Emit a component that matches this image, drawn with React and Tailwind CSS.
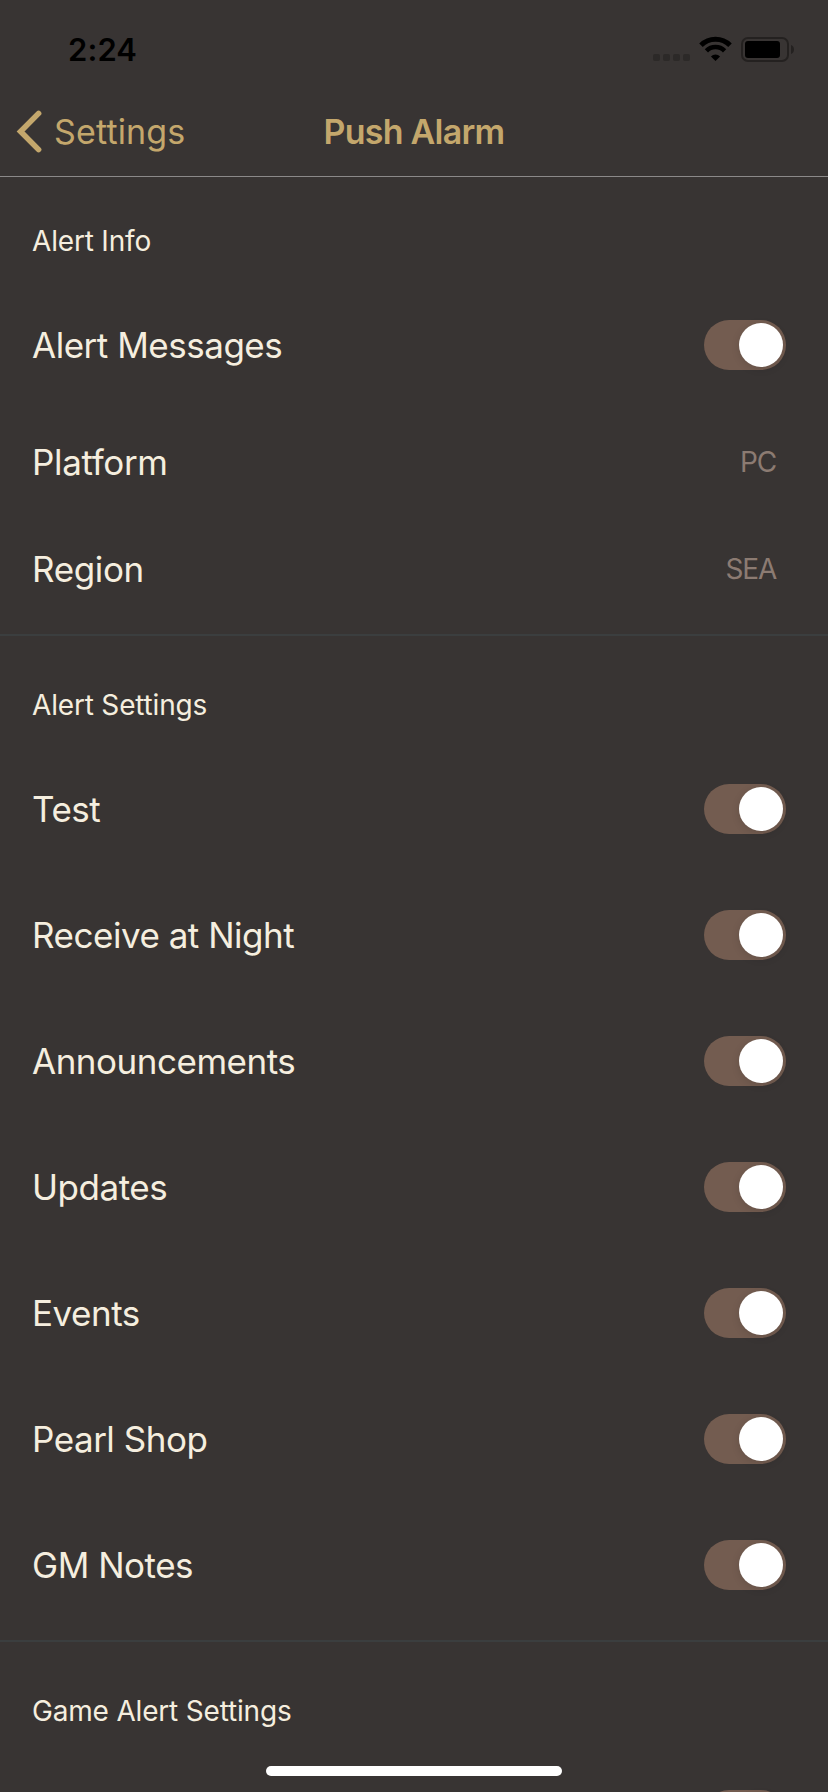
import { useState } from 'react'

const alertSettings = ['Test', 'Receive at Night', 'Announcements', 'Updates', 'Events', 'Pearl Shop', 'GM Notes']

function StatusBar() {
  return (
    <div className="flex h-[88px] items-start justify-between pl-[68px] pr-[33px]">
      <span className="mt-[31px] text-[31px] leading-[38px] font-semibold tracking-[0.1px] text-black">2:24</span>
      <div className="mt-[36px] flex h-[26px] items-start">
        <div className="mt-[18px] mr-[9px] flex gap-[3px]">
          {[0, 1, 2, 3].map((i) => (
            <span key={i} className="size-[7px] rounded-[2px] bg-[#2c2928]" />
          ))}
        </div>
        <svg className="h-[26px] w-[33px]" viewBox="0 0 33 26" fill="none">
          <path d="M2 9.2 A20.5 20.5 0 0 1 31 9.2" stroke="#000" strokeWidth="5" />
          <path d="M7.4 14.8 A12.8 12.8 0 0 1 25.6 14.8" stroke="#000" strokeWidth="4.6" />
          <path d="M16.5 25 L11.9 20.4 A6.5 6.5 0 0 1 21.1 20.4 Z" fill="#000" />
        </svg>
        <svg className="ml-[9px] h-[26px] w-[54px]" viewBox="0 0 54 26" fill="none">
          <rect x="1" y="2" width="46" height="23" rx="6" stroke="#242120" strokeWidth="2" />
          <rect x="4" y="5" width="35" height="17" rx="3" fill="#000" />
          <path d="M50 9 C54 10.5 54 16.5 50 18 Z" fill="#242120" />
        </svg>
      </div>
    </div>
  )
}

function NavBar() {
  return (
    <div className="grid h-[88px] grid-cols-3 items-center text-[34px] leading-[44px] text-[#c4a76c]">
      <button className="flex items-center pl-[16px]">
        <svg className="h-[44px] w-[27px]" viewBox="0 0 27 44" fill="none">
          <path d="M22.6 3.4 L4.6 21.5 L22.6 39.6" stroke="currentColor" strokeWidth="5.6" strokeLinecap="round" />
        </svg>
        <span className="ml-[11px] tracking-[0.15px]">Settings</span>
      </button>
      <h1 className="text-center font-semibold tracking-[-0.75px] whitespace-nowrap">Push Alarm</h1>
    </div>
  )
}

function Toggle() {
  const [on, setOn] = useState(true)

  return (
    <button
      role="switch"
      aria-checked={on}
      onClick={() => setOn(!on)}
      className={`flex h-[50px] w-[82px] items-center rounded-full px-[3px] ${on ? 'justify-end bg-[#735c50]' : 'justify-start bg-[#54504e]'}`}
    >
      <span className="size-[44px] rounded-full bg-white shadow-[0_2px_8px_rgba(0,0,0,0.12)]" />
    </button>
  )
}

function ToggleRow({ label }) {
  return (
    <div className="flex h-[126px] items-center justify-between pr-[42px] pl-[32px]">
      <span className="text-[35px] leading-[44px] tracking-[-0.48px]">{label}</span>
      <Toggle />
    </div>
  )
}

function ValueRow({ label, value }) {
  return (
    <div className="flex h-[107px] items-center justify-between pr-[52px] pl-[32px]">
      <span className="text-[35px] leading-[44px] tracking-[-0.35px]">{label}</span>
      <span className="text-[28px] leading-[36px] tracking-[-1.2px] text-[#8c7b72]">{value}</span>
    </div>
  )
}

function Section({ title, className = 'h-[110px] pt-[51px]', children }) {
  return (
    <section className="border-b-2 border-[#3b3e3f] pb-3">
      <h2 className={`pl-[32px] text-[28px] leading-[36px] tracking-[-0.18px] ${className}`}>{title}</h2>
      {children}
    </section>
  )
}

export default function App() {
  return (
    <div className="relative h-[1792px] w-[828px] overflow-hidden bg-[#383433] font-['Inter',sans-serif] text-[#f5eedf]">
      <header className="border-b border-[#8b8989]">
        <StatusBar />
        <NavBar />
      </header>

      <Section title="Alert Info" className="h-[105px] pt-[46px]">
        <ToggleRow label="Alert Messages" />
        <ValueRow label="Platform" value="PC" />
        <ValueRow label="Region" value="SEA" />
      </Section>

      <Section title="Alert Settings">
        {alertSettings.map((label) => (
          <ToggleRow key={label} label={label} />
        ))}
      </Section>

      <Section title="Game Alert Settings">
        <ToggleRow label="" />
      </Section>

      {/* home indicator */}
      <div className="absolute top-[1766px] left-[266px] h-[10px] w-[296px] rounded-full bg-white" />
    </div>
  )
}
